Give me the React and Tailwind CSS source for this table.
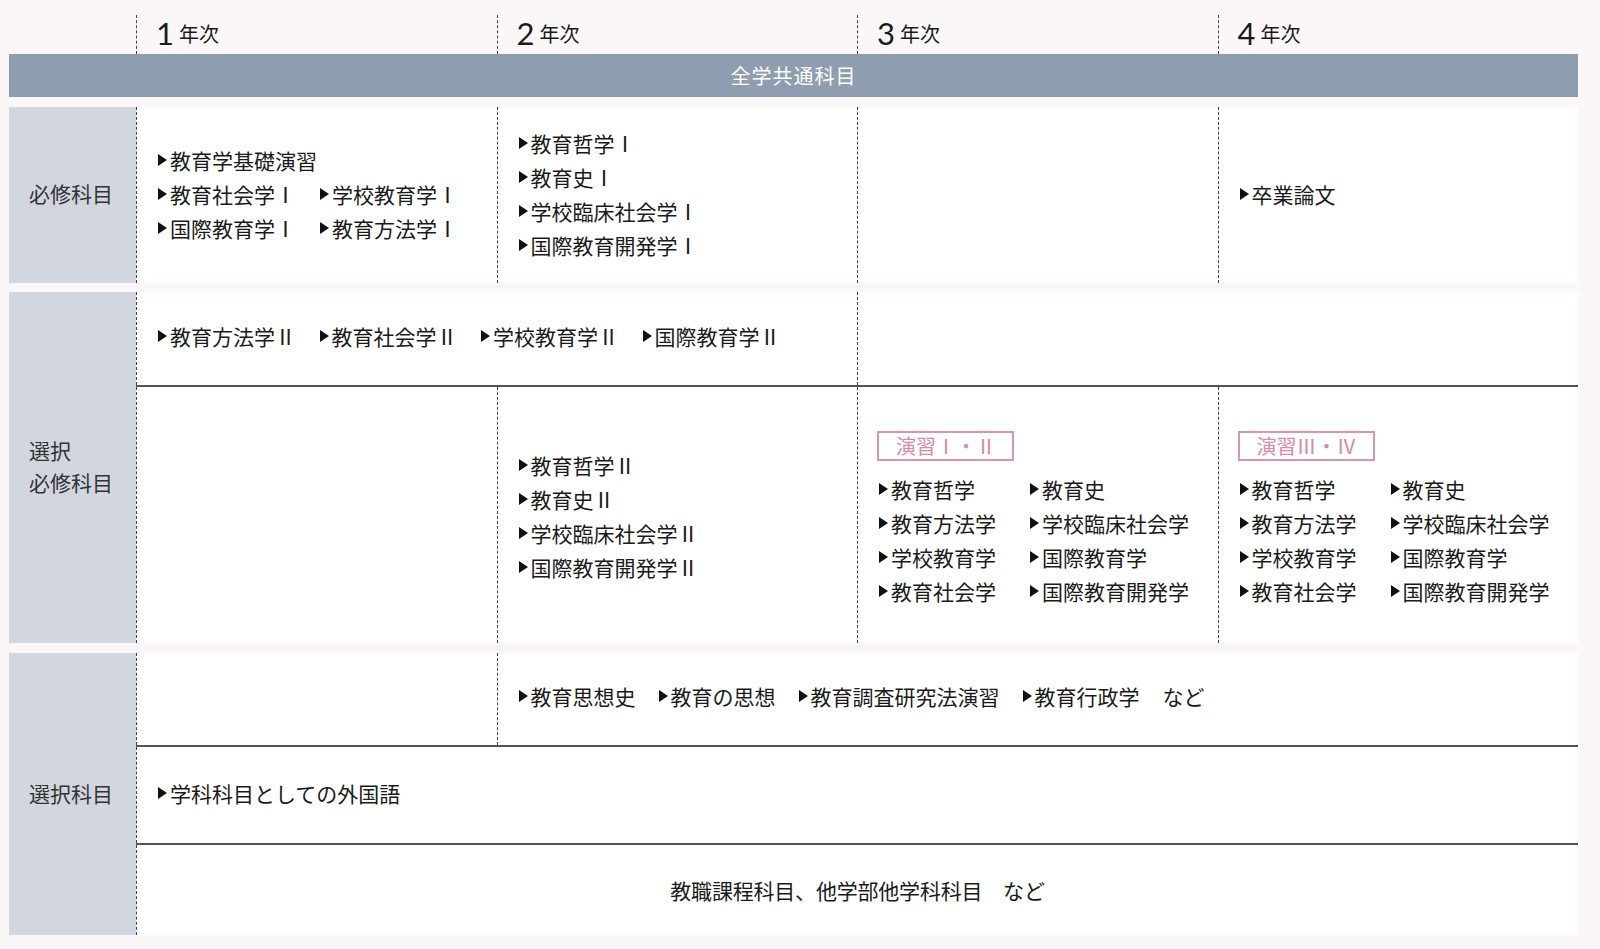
const years = ['1', '2', '3', '4'];

const Tri = () => (
  <span className="mr-[3px] inline-block h-0 w-0 border-y-[6px] border-l-[9px] border-y-transparent border-l-[#111]" />
);

function Item({ children }) {
  return (
    <span className="inline-flex items-center whitespace-nowrap">
      <Tri />
      {children}
    </span>
  );
}

function Label({ className = '', children }) {
  return (
    <div className={`flex w-[127px] shrink-0 items-center bg-[#d1d6df] pl-[20px] text-[21px] leading-[32px] text-[#333] ${className}`}>
      <div>{children}</div>
    </div>
  );
}

function Cell({ className = '', children }) {
  return (
    <div className={`flex flex-col justify-center border-l border-dashed border-[#444] pl-[21px] ${className}`}>
      {children}
    </div>
  );
}

function Badge({ children }) {
  return (
    <div className="mb-[11px] -ml-[2px] w-[137px] border-2 border-[#dc95ae] pl-[17px] text-[20px] leading-[26px] text-[#d98aa6]">
      {children}
    </div>
  );
}

function Seminar({ label }) {
  const list = ['教育哲学', '教育史', '教育方法学', '学校臨床社会学', '学校教育学', '国際教育学', '教育社会学', '国際教育開発学'];
  return (
    <Cell className="pt-[8px]">
      <Badge>{label}</Badge>
      <div className="grid grid-cols-[151px_auto]">
        {list.map((t) => (
          <Item key={t}>{t}</Item>
        ))}
      </div>
    </Cell>
  );
}

export default function App() {
  return (
    <div className="min-h-[949px] bg-[#fbf7f8] font-['Noto_Sans_CJK_JP',sans-serif] text-[21px] leading-[34px] text-[#1a1a1a]">
      <div className="ml-[9px] w-[1569px]">
        {/* year header */}
        <div className="flex h-[54px]">
          <div className="w-[127px] shrink-0" />
          {years.map((y) => (
            <div key={y} className="mt-[15px] flex flex-1 items-center border-l border-dashed border-[#444] pb-[2px] pl-[19px]">
              <span className="font-['Lato',sans-serif] text-[31px] leading-none">{y}</span>
              <span className="ml-[5px] text-[20px] leading-none">年次</span>
            </div>
          ))}
        </div>

        <div className="flex h-[43px] items-center justify-center bg-[#8e9db0] text-[20px] tracking-[1px] text-white">
          全学共通科目
        </div>

        {/* 必修科目 */}
        <div className="mt-[10px] flex h-[176px]">
          <Label className="pb-[4px]">必修科目</Label>
          <div className="grid flex-1 grid-cols-4 bg-white">
            <Cell className="pb-[6px]">
              <div className="grid grid-cols-[162px_auto]">
                <div className="col-span-2">
                  <Item>教育学基礎演習</Item>
                </div>
                <Item>教育社会学Ⅰ</Item>
                <Item>学校教育学Ⅰ</Item>
                <Item>国際教育学Ⅰ</Item>
                <Item>教育方法学Ⅰ</Item>
              </div>
            </Cell>
            <Cell className="pb-[3px]">
              <Item>教育哲学Ⅰ</Item>
              <Item>教育史Ⅰ</Item>
              <Item>学校臨床社会学Ⅰ</Item>
              <Item>国際教育開発学Ⅰ</Item>
            </Cell>
            <Cell />
            <Cell className="pb-[2px]">
              <Item>卒業論文</Item>
            </Cell>
          </div>
        </div>

        {/* 選択必修科目 */}
        <div className="mt-[9px] flex h-[351px]">
          <Label className="pb-[3px]">
            選択
            <br />
            必修科目
          </Label>
          <div className="flex flex-1 flex-col bg-white">
            <div className="grid h-[93px] grid-cols-2">
              <Cell className="pb-[8px]">
                <div className="flex">
                  {['教育方法学Ⅱ', '教育社会学Ⅱ', '学校教育学Ⅱ', '国際教育学Ⅱ'].map((t) => (
                    <div key={t} className="w-[161.5px]">
                      <Item>{t}</Item>
                    </div>
                  ))}
                </div>
              </Cell>
              <Cell />
            </div>
            <div className="grid flex-1 grid-cols-4 border-t-2 border-[#555]">
              <Cell />
              <Cell className="pt-[2px]">
                <Item>教育哲学Ⅱ</Item>
                <Item>教育史Ⅱ</Item>
                <Item>学校臨床社会学Ⅱ</Item>
                <Item>国際教育開発学Ⅱ</Item>
              </Cell>
              <Seminar label="演習Ⅰ・Ⅱ" />
              <Seminar label="演習Ⅲ・Ⅳ" />
            </div>
          </div>
        </div>

        {/* 選択科目 */}
        <div className="mt-[10px] flex h-[282px]">
          <Label className="pb-[2px]">選択科目</Label>
          <div className="flex flex-1 flex-col bg-white">
            <div className="grid h-[92px] grid-cols-4">
              <Cell />
              <Cell className="col-span-3 pb-[6px]">
                <div className="flex gap-[23px]">
                  <Item>教育思想史</Item>
                  <Item>教育の思想</Item>
                  <Item>教育調査研究法演習</Item>
                  <Item>教育行政学</Item>
                  <span>など</span>
                </div>
              </Cell>
            </div>
            <div className="flex h-[98px] flex-col justify-center border-t-2 border-[#555]">
              <Cell className="h-full pb-[4px]">
                <Item>学科科目としての外国語</Item>
              </Cell>
            </div>
            <div className="flex flex-1 border-t-2 border-[#555]">
              <div className="flex flex-1 items-center justify-center border-l border-dashed border-[#444] tracking-[-0.2px]">
                教職課程科目、他学部他学科科目　など
              </div>
            </div>
          </div>
        </div>
      </div>
    </div>
  );
}
